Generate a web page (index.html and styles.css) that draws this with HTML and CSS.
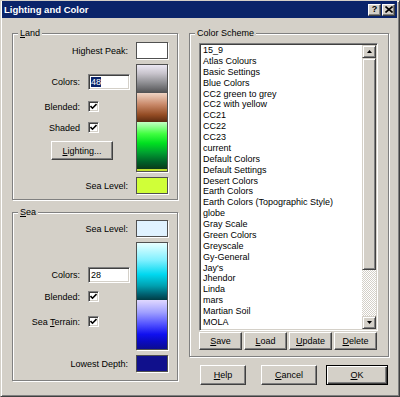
FILE: index.html
```html
<!DOCTYPE html>
<html lang="en">
<head>
  <meta charset="UTF-8" />
  <title>Lighting and Color</title>
  <link rel="stylesheet" href="styles.css">
</head>
<body>

  <div class="window">
    <!-- Caption -->
    <div class="titlebar">
      <span class="title">Lighting and Color</span>
      <div class="caption-btns">
        <span class="cbtn q">?</span>
        <span class="cbtn">
          <svg width="8" height="7" viewBox="0 0 8 7"><path d="M0.5 0.5 L7.5 6.5 M7.5 0.5 L0.5 6.5" stroke="#000" stroke-width="1.6"/></svg>
        </span>
      </div>
    </div>

    <div class="client">
      <div class="left-col">

        <!-- Land -->
        <div class="group land">
          <span class="legend"><u>L</u>and</span>
          <div class="gb-grid">
            <div class="wide-label">Highest Peak:</div>
            <div class="swatch peak"></div>

            <div class="controls">
              <div class="row r-colors"><span class="lbl">Colors:</span><span class="field"><span class="sel">48</span></span></div>
              <div class="row r-blend"><span class="lbl">Blended:</span><span class="check"><svg width="7" height="7" viewBox="0 0 7 7"><path d="M0.5 3 L2.5 5.2 L6.5 1" fill="none" stroke="#000" stroke-width="1.6"/></svg></span></div>
              <div class="row r-shade"><span class="lbl">Shaded</span><span class="check"><svg width="7" height="7" viewBox="0 0 7 7"><path d="M0.5 3 L2.5 5.2 L6.5 1" fill="none" stroke="#000" stroke-width="1.6"/></svg></span></div>
              <div class="btn lighting"><span><u>L</u>ighting...</span></div>
            </div>
            <div class="bar">
              <div class="seg gray"></div>
              <div class="seg brown"></div>
              <div class="seg green"></div>
              <div class="seg lime"></div>
            </div>

            <div class="wide-label">Sea Level:</div>
            <div class="swatch land-sea"></div>
          </div>
        </div>

        <!-- Sea -->
        <div class="group sea">
          <span class="legend"><u>S</u>ea</span>
          <div class="gb-grid">
            <div class="wide-label">Sea Level:</div>
            <div class="swatch sea-lvl"></div>

            <div class="controls">
              <div class="row r-colors"><span class="lbl">Colors:</span><span class="field">28</span></div>
              <div class="row r-blend"><span class="lbl">Blended:</span><span class="check"><svg width="7" height="7" viewBox="0 0 7 7"><path d="M0.5 3 L2.5 5.2 L6.5 1" fill="none" stroke="#000" stroke-width="1.6"/></svg></span></div>
              <div class="row r-terrain"><span class="lbl">Sea <u>T</u>errain:</span><span class="check"><svg width="7" height="7" viewBox="0 0 7 7"><path d="M0.5 3 L2.5 5.2 L6.5 1" fill="none" stroke="#000" stroke-width="1.6"/></svg></span></div>
            </div>
            <div class="bar">
              <div class="seg cyan"></div>
              <div class="seg blue"></div>
            </div>

            <div class="wide-label">Lowest Depth:</div>
            <div class="swatch depth"></div>
          </div>
        </div>
      </div>

      <div class="right-col">
        <!-- Color Scheme -->
        <div class="group scheme">
          <span class="legend">Color Scheme</span>
          <div class="listbox">
            <ul class="items">
              <li>15_9</li>
              <li>Atlas Colours</li>
              <li>Basic Settings</li>
              <li>Blue Colors</li>
              <li>CC2 green to grey</li>
              <li>CC2 with yellow</li>
              <li>CC21</li>
              <li>CC22</li>
              <li>CC23</li>
              <li>current</li>
              <li>Default Colors</li>
              <li>Default Settings</li>
              <li>Desert Colors</li>
              <li>Earth Colors</li>
              <li>Earth Colors (Topographic Style)</li>
              <li>globe</li>
              <li>Gray Scale</li>
              <li>Green Colors</li>
              <li>Greyscale</li>
              <li>Gy-General</li>
              <li>Jay's</li>
              <li>Jhendor</li>
              <li>Linda</li>
              <li>mars</li>
              <li>Martian Soil</li>
              <li>MOLA</li>
            </ul>
            <div class="vscroll">
              <div class="sb-btn"><svg width="5" height="3" viewBox="0 0 5 3"><path d="M2.5 0 L5 3 L0 3 Z" fill="#000"/></svg></div>
              <div class="thumb"></div>
              <div class="track"></div>
              <div class="sb-btn"><svg width="5" height="3" viewBox="0 0 5 3"><path d="M0 0 L5 0 L2.5 3 Z" fill="#000"/></svg></div>
            </div>
          </div>
          <div class="scheme-btns">
            <div class="btn"><span><u>S</u>ave</span></div>
            <div class="btn"><span><u>L</u>oad</span></div>
            <div class="btn"><span><u>U</u>pdate</span></div>
            <div class="btn"><span><u>D</u>elete</span></div>
          </div>
        </div>

        <div class="dialog-btns">
          <div class="btn b-help"><span><u>H</u>elp</span></div>
          <div class="btn b-cancel"><span><u>C</u>ancel</span></div>
          <div class="btn b-ok default"><span><u>O</u>K</span></div>
        </div>
      </div>
    </div>
  </div>

</body>
</html>
```

FILE: styles.css
```css
body { margin: 0; font-family: "Liberation Sans", Arial, sans-serif; font-size: 9px; color: #000; }
.window { width: 400px; height: 397px; box-sizing: border-box; background: #d4d0c8; border: 1px solid; border-color: #d4d0c8 #404040 #404040 #d4d0c8; box-shadow: inset 1px 1px #fff, inset -1px -1px #808080; padding: 0 2px 2px 1px; }

/* caption */
.titlebar { height: 17px; background: #0a246a; color: #fff; display: flex; align-items: center; justify-content: space-between; padding: 0 2px 0 2px; }
.title { font-weight: bold; font-size: 9.5px; }
.caption-btns { display: flex; gap: 1px; }
.cbtn { width: 13px; height: 12px; box-sizing: border-box; background: #d4d0c8; border: 1px solid; border-color: #fff #404040 #404040 #fff; box-shadow: inset -1px -1px #808080; display: flex; align-items: center; justify-content: center; color: #000; }
.cbtn.q { font-weight: bold; font-size: 9px; line-height: 1; }

.client { display: flex; padding: 15px 0 0 10px; gap: 11px; }
.left-col { width: 166px; display: flex; flex-direction: column; gap: 12px; }
.right-col { width: 200px; }

/* etched group boxes */
.group { position: relative; border: 1px solid #808080; box-shadow: inset 1px 1px #fff, 1px 1px 0 #fff; }
.legend { position: absolute; top: -6px; left: 5px; padding: 0 2px; background: #d4d0c8; line-height: 11px; }
.land { height: 167px; box-sizing: border-box; padding-top: 8px; }
.sea { height: 169px; box-sizing: border-box; padding-top: 7px; }

.gb-grid { display: grid; grid-template-columns: 117px 32px; grid-template-rows: 17px 108px 17px; column-gap: 6px; row-gap: 5px; }
.wide-label { align-self: center; text-align: right; padding-right: 2px; }

.swatch { border: 1px solid #505050; box-sizing: border-box; box-shadow: 1px 1px 0 #fff; }
.peak { background: #fff; }
.land-sea { background: #d0ff38; }
.sea-lvl { background: #e0f2ff; }
.depth { background: #10108c; }

.bar { border: 1px solid #505050; box-shadow: 1px 1px 0 #fff; display: flex; flex-direction: column; }
.seg { width: 100%; }
.gray { height: 28px; background: linear-gradient(#ece8f4, #c8c4cc 30%, #8c8c90 65%, #505052); }
.brown { height: 29px; background: linear-gradient(#f0d4c4, #c88868 40%, #944c24 75%, #5a2a10); }
.green { height: 47px; background: linear-gradient(#c4ffc4, #40ff40 25%, #00e020 45%, #00a030 65%, #006028 85%, #0a3a1a); }
.lime { height: 2px; background: #c0e030; }
.cyan { height: 57px; background: linear-gradient(#e8ffff, #80f0ff 30%, #00d8f0 55%, #00a0b0 75%, #006070 90%, #003c44); }
.blue { height: 49px; background: linear-gradient(#e0d8ff, #a0a0ff 25%, #5050ff 50%, #1010f0 70%, #0a0ac0 85%, #0c0c90); }

.controls { display: flex; flex-direction: column; align-items: flex-start; }
.row { display: flex; align-items: center; }
.lbl { width: 67px; text-align: right; margin-right: 8px; }
.land .r-colors { margin-top: 10px; }
.land .r-blend { margin-top: 11px; }
.land .r-shade { margin-top: 10px; }
.sea .r-colors { margin-top: 25px; }
.sea .r-blend { margin-top: 8px; }
.sea .r-terrain { margin-top: 14px; }

.field { width: 42px; height: 16px; box-sizing: border-box; background: #fff; border: 1px solid; border-color: #808080 #fff #fff #808080; box-shadow: inset 1px 1px #404040, inset -1px -1px #d4d0c8; padding: 0 2px; line-height: 14px; }
.sel { background: #0a246a; color: #fff; }
.check { width: 11px; height: 11px; box-sizing: border-box; background: #fff; border: 1px solid; border-color: #808080 #fff #fff #808080; box-shadow: inset 1px 1px #404040, inset -1px -1px #d4d0c8; display: flex; align-items: center; justify-content: center; }

/* push buttons */
.btn { box-sizing: border-box; background: #d4d0c8; border: 1px solid; border-color: #fff #404040 #404040 #fff; box-shadow: inset -1px -1px #808080; display: flex; align-items: center; justify-content: center; }
.btn.default { border-color: #000; box-shadow: inset 1px 1px #fff, inset -1px -1px #404040, inset -2px -2px #808080; }
.lighting { width: 62px; height: 19px; margin: 8px 0 0 38px; }

/* list */
.scheme { height: 324px; box-sizing: border-box; padding: 9px 0 0 9px; }
.listbox { width: 179px; height: 288px; box-sizing: border-box; background: #fff; border: 1px solid; border-color: #808080 #fff #fff #808080; box-shadow: inset 1px 1px #404040, inset -1px -1px #d4d0c8; padding: 1px; display: flex; }
.items { list-style: none; margin: 0; padding: 0 0 0 2px; flex: 1; line-height: 10.87px; white-space: nowrap; overflow: hidden; }
.vscroll { width: 14px; display: flex; flex-direction: column; }
.sb-btn { height: 13px; box-sizing: border-box; background: #d4d0c8; border: 1px solid; border-color: #d4d0c8 #404040 #404040 #d4d0c8; box-shadow: inset 1px 1px #fff, inset -1px -1px #808080; display: flex; align-items: center; justify-content: center; }
.thumb { height: 212px; box-sizing: border-box; background: #d4d0c8; border: 1px solid; border-color: #d4d0c8 #404040 #404040 #d4d0c8; box-shadow: inset 1px 1px #fff, inset -1px -1px #808080; }
.track { flex: 1; background: repeating-conic-gradient(#fff 0 25%, #d4d0c8 0 50%) 0 0 / 2px 2px; }

.scheme-btns { display: flex; gap: 2px; margin-top: 1px; }
.scheme-btns .btn { width: 43px; height: 18px; }

.dialog-btns { display: flex; margin-top: 8px; }
.b-help { width: 46px; height: 20px; margin-left: 11px; }
.b-cancel { width: 56px; height: 20px; margin-left: 15px; }
.b-ok { width: 62px; height: 20px; margin-left: 9px; }
```
